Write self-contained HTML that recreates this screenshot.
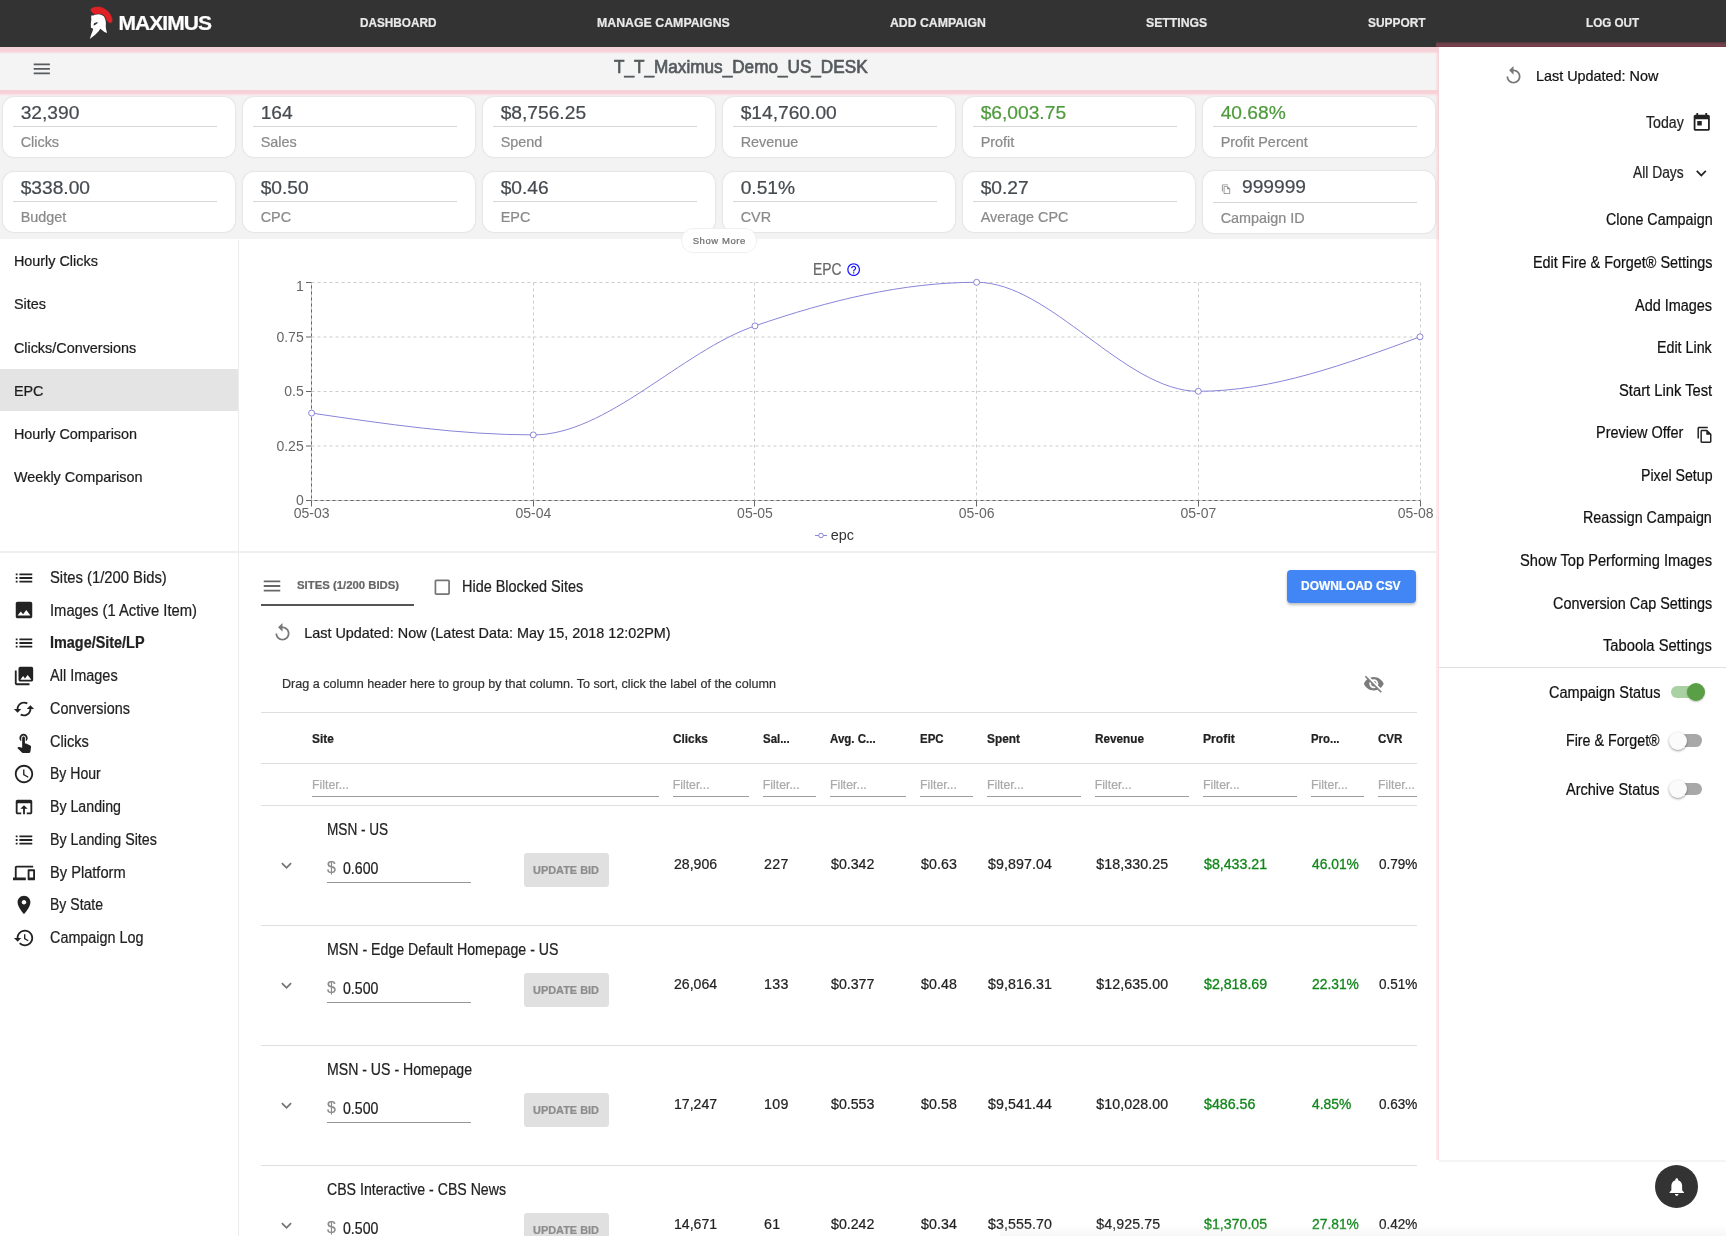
<!DOCTYPE html>
<html><head><meta charset="utf-8"><title>Maximus</title>
<style>
html,body{margin:0;padding:0;}
body{width:1726px;height:1236px;overflow:hidden;background:#fff;position:relative;font-family:"Liberation Sans",sans-serif;}
.a{position:absolute;}
.t{white-space:nowrap;line-height:20px;-webkit-text-stroke-width:0.22px;}
.med{-webkit-text-stroke:0.35px currentColor;}
</style></head><body><div class="a" style="left:0;top:0;width:1726px;height:1236px;will-change:transform;overflow:hidden;">

<div class="a" style="left:0.00px;top:0.00px;width:1726.00px;height:47.00px;background:#333333;"></div>
<div class="a" style="left:0.00px;top:52.00px;width:1439.00px;height:38.00px;background:#f4f4f4;"></div>
<div class="a" style="left:0.00px;top:95.00px;width:1439.00px;height:144.40px;background:#f3f3f3;"></div>
<div class="a" style="left:0;top:46.7px;width:1439px;height:7.7px;background:linear-gradient(to bottom,#f7d1d8 0,#f7d1d8 62%,rgba(247,209,216,0) 100%);"></div>
<div class="a" style="left:0;top:89.9px;width:1439px;height:6.3px;background:linear-gradient(to bottom,#f7d1d8 0,#f7d1d8 58%,rgba(247,209,216,0) 100%);"></div>
<div class="a" style="left:1435.2px;top:47px;width:3.8px;height:193px;background:linear-gradient(to right,rgba(247,209,216,0) 0,rgba(247,209,216,.55) 60%,#f7d1d8 80%,#f7d1d8 100%);"></div>
<div class="a" style="left:1435.600px;top:240px;width:3.400px;height:920px;background:linear-gradient(to right,rgba(247,209,216,0) 0,rgba(247,209,216,.45) 15%,rgba(247,209,216,.45) 70%,rgba(247,209,216,.75) 80%,rgba(247,209,216,.75) 100%);"></div>
<div class="a" style="left:1436px;top:41.500px;width:290px;height:5.500px;background:linear-gradient(to bottom,#4d383c 0,#73424d 45%,#7a4450 80%,#6a3641 100%);"></div>
<svg class="a" style="left:86px;top:4px" width="30" height="38" viewBox="86 4 30 38">
<path fill="#e02226" stroke="#e02226" stroke-width="0.6" stroke-linejoin="round" d="M90.63 9.99 L91.82 8.29 L94.88 7.27 L98.62 6.93 L101.68 7.44 L105.07 9.14 L107.79 11.35 L110.17 14.24 L111.53 17.30 L112.14 20.01 L111.87 22.05 L110.17 22.90 L108.47 22.05 L107.11 20.35 L106.09 17.98 L104.73 15.94 L103.03 14.41 L101.00 13.56 L98.96 13.39 L96.92 13.73 L94.20 14.07 L92.84 12.88Z"/>
<path fill="#ffffff" fill-rule="evenodd" d="M91.14 15.60 L93.18 15.43 L95.22 14.75 L98.96 14.24 L101.68 14.92 L104.05 16.62 L105.41 19.68 L105.92 23.07 L105.75 26.47 L106.09 29.19 L107.11 32.93 L104.39 31.91 L101.68 29.87 L100.32 28.85 L98.62 31.23 L95.22 34.63 L89.78 38.88 L91.14 34.63 L92.50 31.23 L93.18 28.85 L90.97 27.83 L90.80 24.09 L91.31 19.68Z M93.52 25.79 L94.03 23.24 L97.26 22.05 L97.66 23.07 L95.90 24.60Z"/>
</svg>
<div class="a t" style="top:13.49px;font-size:21.00px;color:#ffffff;font-weight:700;letter-spacing:-0.962px;left:118.50px;">MAXIMUS</div>
<div class="a t" style="top:12.95px;font-size:12.90px;color:#e9e9e9;font-weight:700;left:359.60px;transform:scaleX(0.9129);transform-origin:left center;">DASHBOARD</div>
<div class="a t" style="top:12.95px;font-size:12.90px;color:#e9e9e9;font-weight:700;left:596.70px;transform:scaleX(0.9574);transform-origin:left center;">MANAGE CAMPAIGNS</div>
<div class="a t" style="top:12.95px;font-size:12.90px;color:#e9e9e9;font-weight:700;left:889.80px;transform:scaleX(0.9520);transform-origin:left center;">ADD CAMPAIGN</div>
<div class="a t" style="top:12.95px;font-size:12.90px;color:#e9e9e9;font-weight:700;left:1146.00px;transform:scaleX(0.9508);transform-origin:left center;">SETTINGS</div>
<div class="a t" style="top:12.95px;font-size:12.90px;color:#e9e9e9;font-weight:700;left:1367.80px;transform:scaleX(0.9241);transform-origin:left center;">SUPPORT</div>
<div class="a t" style="top:12.95px;font-size:12.90px;color:#e9e9e9;font-weight:700;left:1586.20px;transform:scaleX(0.9058);transform-origin:left center;">LOG OUT</div>
<svg class="a" style="left:31.20px;top:57.70px;" width="21.60" height="21.60" viewBox="0 0 24 24"><path fill="#555b5e" d="M3 18h18v-2H3v2zm0-5h18v-2H3v2zm0-7v2h18V6H3z"/></svg>
<div class="a t" style="top:57.11px;font-size:17.90px;color:#555b5e;left:614.00px;-webkit-text-stroke:0.7px #555b5e;transform:scaleX(0.9588);transform-origin:left center;">T_T_Maximus_Demo_US_DESK</div>
<div class="a" style="left:3.00px;top:97.00px;width:232.00px;height:60.00px;background:#fff;border-radius:11px;box-shadow:0 0 2px rgba(0,0,0,.18);"></div>
<div class="a t" style="top:102.52px;font-size:19.20px;color:#464b50;left:20.70px;">32,390</div>
<div class="a" style="left:13.00px;top:126.00px;width:204.00px;height:1.00px;background:#d6d6d6;"></div>
<div class="a t" style="top:132.07px;font-size:14.40px;color:#8a8a8a;left:20.70px;">Clicks</div>
<div class="a" style="left:243.00px;top:97.00px;width:232.00px;height:60.00px;background:#fff;border-radius:11px;box-shadow:0 0 2px rgba(0,0,0,.18);"></div>
<div class="a t" style="top:102.52px;font-size:19.20px;color:#464b50;left:260.70px;">164</div>
<div class="a" style="left:253.00px;top:126.00px;width:204.00px;height:1.00px;background:#d6d6d6;"></div>
<div class="a t" style="top:132.07px;font-size:14.40px;color:#8a8a8a;left:260.70px;">Sales</div>
<div class="a" style="left:483.00px;top:97.00px;width:232.00px;height:60.00px;background:#fff;border-radius:11px;box-shadow:0 0 2px rgba(0,0,0,.18);"></div>
<div class="a t" style="top:102.52px;font-size:19.20px;color:#464b50;left:500.70px;">$8,756.25</div>
<div class="a" style="left:493.00px;top:126.00px;width:204.00px;height:1.00px;background:#d6d6d6;"></div>
<div class="a t" style="top:132.07px;font-size:14.40px;color:#8a8a8a;left:500.70px;">Spend</div>
<div class="a" style="left:723.00px;top:97.00px;width:232.00px;height:60.00px;background:#fff;border-radius:11px;box-shadow:0 0 2px rgba(0,0,0,.18);"></div>
<div class="a t" style="top:102.52px;font-size:19.20px;color:#464b50;left:740.70px;">$14,760.00</div>
<div class="a" style="left:733.00px;top:126.00px;width:204.00px;height:1.00px;background:#d6d6d6;"></div>
<div class="a t" style="top:132.07px;font-size:14.40px;color:#8a8a8a;left:740.70px;">Revenue</div>
<div class="a" style="left:963.00px;top:97.00px;width:232.00px;height:60.00px;background:#fff;border-radius:11px;box-shadow:0 0 2px rgba(0,0,0,.18);"></div>
<div class="a t" style="top:102.52px;font-size:19.20px;color:#4f9a3c;left:980.70px;">$6,003.75</div>
<div class="a" style="left:973.00px;top:126.00px;width:204.00px;height:1.00px;background:#d6d6d6;"></div>
<div class="a t" style="top:132.07px;font-size:14.40px;color:#8a8a8a;left:980.70px;">Profit</div>
<div class="a" style="left:1203.00px;top:97.00px;width:232.00px;height:60.00px;background:#fff;border-radius:11px;box-shadow:0 0 2px rgba(0,0,0,.18);"></div>
<div class="a t" style="top:102.52px;font-size:19.20px;color:#4f9a3c;left:1220.70px;">40.68%</div>
<div class="a" style="left:1213.00px;top:126.00px;width:204.00px;height:1.00px;background:#d6d6d6;"></div>
<div class="a t" style="top:132.07px;font-size:14.40px;color:#8a8a8a;left:1220.70px;">Profit Percent</div>
<div class="a" style="left:3.00px;top:172.00px;width:232.00px;height:60.00px;background:#fff;border-radius:11px;box-shadow:0 0 2px rgba(0,0,0,.18);"></div>
<div class="a t" style="top:177.52px;font-size:19.20px;color:#464b50;left:20.70px;">$338.00</div>
<div class="a" style="left:13.00px;top:201.00px;width:204.00px;height:1.00px;background:#d6d6d6;"></div>
<div class="a t" style="top:207.07px;font-size:14.40px;color:#8a8a8a;left:20.70px;">Budget</div>
<div class="a" style="left:243.00px;top:172.00px;width:232.00px;height:60.00px;background:#fff;border-radius:11px;box-shadow:0 0 2px rgba(0,0,0,.18);"></div>
<div class="a t" style="top:177.52px;font-size:19.20px;color:#464b50;left:260.70px;">$0.50</div>
<div class="a" style="left:253.00px;top:201.00px;width:204.00px;height:1.00px;background:#d6d6d6;"></div>
<div class="a t" style="top:207.07px;font-size:14.40px;color:#8a8a8a;left:260.70px;">CPC</div>
<div class="a" style="left:483.00px;top:172.00px;width:232.00px;height:60.00px;background:#fff;border-radius:11px;box-shadow:0 0 2px rgba(0,0,0,.18);"></div>
<div class="a t" style="top:177.52px;font-size:19.20px;color:#464b50;left:500.70px;">$0.46</div>
<div class="a" style="left:493.00px;top:201.00px;width:204.00px;height:1.00px;background:#d6d6d6;"></div>
<div class="a t" style="top:207.07px;font-size:14.40px;color:#8a8a8a;left:500.70px;">EPC</div>
<div class="a" style="left:723.00px;top:172.00px;width:232.00px;height:60.00px;background:#fff;border-radius:11px;box-shadow:0 0 2px rgba(0,0,0,.18);"></div>
<div class="a t" style="top:177.52px;font-size:19.20px;color:#464b50;left:740.70px;">0.51%</div>
<div class="a" style="left:733.00px;top:201.00px;width:204.00px;height:1.00px;background:#d6d6d6;"></div>
<div class="a t" style="top:207.07px;font-size:14.40px;color:#8a8a8a;left:740.70px;">CVR</div>
<div class="a" style="left:963.00px;top:172.00px;width:232.00px;height:60.00px;background:#fff;border-radius:11px;box-shadow:0 0 2px rgba(0,0,0,.18);"></div>
<div class="a t" style="top:177.52px;font-size:19.20px;color:#464b50;left:980.70px;">$0.27</div>
<div class="a" style="left:973.00px;top:201.00px;width:204.00px;height:1.00px;background:#d6d6d6;"></div>
<div class="a t" style="top:207.07px;font-size:14.40px;color:#8a8a8a;left:980.70px;">Average CPC</div>
<div class="a" style="left:1203.00px;top:170.80px;width:232.00px;height:62.00px;background:#fff;border-radius:11px;box-shadow:0 0 2px rgba(0,0,0,.18);"></div>
<div class="a t" style="top:176.82px;font-size:19.20px;color:#464b50;left:1242.00px;">999999</div>
<div class="a" style="left:1213.00px;top:202.00px;width:204.00px;height:1.00px;background:#d6d6d6;"></div>
<div class="a t" style="top:208.07px;font-size:14.40px;color:#8a8a8a;left:1220.70px;">Campaign ID</div>
<svg class="a" style="left:1221.45px;top:183.75px;" width="10.50" height="10.50" viewBox="0 0 24 24"><path fill="#8a8a8a" d="M16 1H4c-1.1 0-2 .9-2 2v14h2V3h12V1zm-1 4H8c-1.1 0-1.990.9-1.990 2L6 21c0 1.1.890 2 1.990 2H19c1.100 0 2-.9 2-2V11l-6-6zM8 21V7h6v5h5v9H8z"/></svg>
<div class="a" style="left:238.00px;top:240.00px;width:1.00px;height:996.00px;background:#ececec;"></div>
<div class="a" style="left:0.00px;top:551.00px;width:1436.00px;height:2.00px;background:#eeeeee;"></div>
<div class="a" style="left:0.00px;top:369.20px;width:238.00px;height:42.30px;background:#e4e4e4;"></div>
<div class="a t" style="top:250.77px;font-size:14.40px;color:#1c1c1c;left:13.90px;">Hourly Clicks</div>
<div class="a t" style="top:294.17px;font-size:14.40px;color:#1c1c1c;left:13.90px;">Sites</div>
<div class="a t" style="top:337.57px;font-size:14.40px;color:#1c1c1c;left:13.90px;">Clicks/Conversions</div>
<div class="a t" style="top:380.97px;font-size:14.40px;color:#1c1c1c;left:13.90px;">EPC</div>
<div class="a t" style="top:424.37px;font-size:14.40px;color:#1c1c1c;left:13.90px;">Hourly Comparison</div>
<div class="a t" style="top:467.17px;font-size:14.40px;color:#1c1c1c;left:13.90px;">Weekly Comparison</div>
<div class="a" style="left:681.50px;top:228.60px;width:74.80px;height:23.40px;background:rgba(255,255,255,.93);border-radius:12px;box-shadow:0 0 0 1px #efefef;"></div>
<div class="a t" style="top:230.71px;font-size:9.50px;color:#6e6e6e;letter-spacing:0.567px;left:692.70px;">Show More</div>
<svg class="a" style="left:0;top:0" width="1440" height="560" viewBox="0 0 1440 560" font-family="Liberation Sans, sans-serif"><g stroke="#666" stroke-width="1" fill="none"><path d="M311.5 282.500V500.500"/><path d="M311.500 500.500H1420.500"/></g><g stroke="#ccc" stroke-width="1" stroke-dasharray="3 3" fill="none"><path d="M311.500 282.5H1420.500"/><path d="M311.500 337.0H1420.500"/><path d="M311.500 391.5H1420.500"/><path d="M311.500 446.0H1420.500"/><path d="M311.500 500.5H1420.500"/><path d="M311.5 282.500V500.500"/><path d="M533.5 282.500V500.500"/><path d="M754.5 282.500V500.500"/><path d="M976.5 282.500V500.500"/><path d="M1198.5 282.500V500.500"/><path d="M1420.5 282.500V500.500"/></g><g stroke="#666" stroke-width="1"><path d="M306 282.5H311.500"/><path d="M306 337.0H311.500"/><path d="M306 391.5H311.500"/><path d="M306 446.0H311.500"/><path d="M306 500.5H311.500"/><path d="M311.5 500.500V506.500"/><path d="M533.5 500.500V506.500"/><path d="M754.5 500.500V506.500"/><path d="M976.5 500.500V506.500"/><path d="M1198.5 500.500V506.500"/><path d="M1420.5 500.500V506.500"/></g><g fill="#666" font-size="14"><text x="303.700" y="290.9" text-anchor="end">1</text><text x="303.700" y="341.8" text-anchor="end">0.75</text><text x="303.700" y="396.3" text-anchor="end">0.5</text><text x="303.700" y="450.8" text-anchor="end">0.25</text><text x="303.700" y="505.3" text-anchor="end">0</text><text x="311.6" y="518.000" text-anchor="middle">05-03</text><text x="533.3" y="518.000" text-anchor="middle">05-04</text><text x="755.0" y="518.000" text-anchor="middle">05-05</text><text x="976.6" y="518.000" text-anchor="middle">05-06</text><text x="1198.3" y="518.000" text-anchor="middle">05-07</text><text x="1433.500" y="518.000" text-anchor="end">05-08</text></g><path fill="none" stroke="#8884d8" stroke-width="1" d="M311.60,413.10C385.49,424.00,459.39,434.90,533.28,434.90C607.17,434.90,681.07,351.33,754.96,325.90C828.850,300.47,902.75,282.30,976.64,282.30C1050.53,282.30,1124.43,391.30,1198.32,391.30C1272.21,391.30,1346.11,364.05,1420.00,336.80"/><circle cx="311.60" cy="413.10" r="3" fill="#fff" stroke="#8884d8" stroke-width="1"/><circle cx="533.28" cy="434.90" r="3" fill="#fff" stroke="#8884d8" stroke-width="1"/><circle cx="754.96" cy="325.90" r="3" fill="#fff" stroke="#8884d8" stroke-width="1"/><circle cx="976.64" cy="282.30" r="3" fill="#fff" stroke="#8884d8" stroke-width="1"/><circle cx="1198.32" cy="391.30" r="3" fill="#fff" stroke="#8884d8" stroke-width="1"/><circle cx="1420.00" cy="336.80" r="3" fill="#fff" stroke="#8884d8" stroke-width="1"/><path d="M815 535.500H827" stroke="#8884d8" stroke-width="1" fill="none"/><circle cx="821" cy="535.500" r="2.300" fill="#fff" stroke="#8884d8" stroke-width="1"/><text x="830.800" y="540.200" font-size="14.400" fill="#333">epc</text></svg>
<div class="a t" style="top:258.79px;font-size:16.30px;color:#666;left:813.40px;transform:scaleX(0.855);transform-origin:left center;">EPC</div>
<svg class="a" style="left:845.55px;top:262.35px;" width="15.30" height="15.30" viewBox="0 0 24 24"><path fill="#1a1aff" d="M11 18h2v-2h-2v2zm1-16C6.48 2 2 6.48 2 12s4.48 10 10 10 10-4.48 10-10S17.52 2 12 2zm0 18c-4.41 0-8-3.59-8-8s3.59-8 8-8 8 3.59 8 8-3.59 8-8 8zm0-14c-2.21 0-4 1.79-4 4h2c0-1.1.9-2 2-2s2 .9 2 2c0 2-3 1.75-3 5h2c0-2.250 3-2.5 3-5 0-2.21-1.79-4-4-4z"/></svg>
<svg class="a" style="left:12.90px;top:566.70px;" width="22.00" height="22.00" viewBox="0 0 24 24"><path fill="#222" d="M3 13h2v-2H3v2zm0 4h2v-2H3v2zm0-8h2V7H3v2zm4 4h14v-2H7v2zm0 4h14v-2H7v2zM7 7v2h14V7H7z"/></svg>
<div class="a t" style="top:567.78px;font-size:15.80px;color:#222;left:49.75px;transform:scaleX(0.9363);transform-origin:left center;">Sites (1/200 Bids)</div>
<svg class="a" style="left:12.90px;top:599.47px;" width="22.00" height="22.00" viewBox="0 0 24 24"><path fill="#222" d="M21 19V5c0-1.1-.9-2-2-2H5c-1.1 0-2 .9-2 2v14c0 1.1.9 2 2 2h14c1.1 0 2-.9 2-2zM8.5 13.5l2.5 3.01L14.5 12l4.5 6H5l3.5-4.500z"/></svg>
<div class="a t" style="top:600.55px;font-size:15.80px;color:#222;left:49.75px;transform:scaleX(0.9351);transform-origin:left center;">Images (1 Active Item)</div>
<svg class="a" style="left:12.90px;top:632.24px;" width="22.00" height="22.00" viewBox="0 0 24 24"><path fill="#222" d="M3 13h2v-2H3v2zm0 4h2v-2H3v2zm0-8h2V7H3v2zm4 4h14v-2H7v2zm0 4h14v-2H7v2zM7 7v2h14V7H7z"/></svg>
<div class="a t" style="top:633.32px;font-size:15.80px;color:#222;font-weight:700;left:49.75px;transform:scaleX(0.9127);transform-origin:left center;">Image/Site/LP</div>
<svg class="a" style="left:12.90px;top:665.01px;" width="22.00" height="22.00" viewBox="0 0 24 24"><path fill="#222" d="M22 16V4c0-1.1-.9-2-2-2H8c-1.1 0-2 .9-2 2v12c0 1.1.9 2 2 2h12c1.1 0 2-.9 2-2zm-11-4l2.03 2.71L16 11l4 5H8l3-4zM2 6v14c0 1.1.9 2 2 2h14v-2H4V6H2z"/></svg>
<div class="a t" style="top:666.09px;font-size:15.80px;color:#222;left:49.75px;transform:scaleX(0.9173);transform-origin:left center;">All Images</div>
<svg class="a" style="left:12.90px;top:697.78px;" width="22.00" height="22.00" viewBox="0 0 24 24"><path fill="#222" d="M19 8l-4 4h3c0 3.31-2.69 6-6 6-1.01 0-1.97-.25-2.8-.7l-1.46 1.46C8.97 19.54 10.43 20 12 20c4.42 0 8-3.58 8-8h3l-4-4zM6 12c0-3.31 2.69-6 6-6 1.01 0 1.97.25 2.8.7l1.46-1.46C15.03 4.46 13.57 4 12 4c-4.42 0-8 3.58-8 8H1l4 4 4-4H6z"/></svg>
<div class="a t" style="top:698.86px;font-size:15.80px;color:#222;left:49.75px;transform:scaleX(0.9105);transform-origin:left center;">Conversions</div>
<svg class="a" style="left:12.90px;top:730.55px;" width="22.00" height="22.00" viewBox="0 0 24 24"><path fill="#222" d="M9 11.24V7.5C9 6.12 10.12 5 11.5 5S14 6.12 14 7.5v3.74c1.21-.81 2-2.18 2-3.74C16 5.01 13.99 3 11.5 3S7 5.01 7 7.5c0 1.56.79 2.93 2 3.74zm9.84 4.63l-4.54-2.26c-.17-.07-.35-.11-.54-.11H13v-6c0-.83-.67-1.5-1.5-1.5S10 6.67 10 7.5v10.74l-3.43-.72c-.08-.01-.15-.03-.24-.03-.31 0-.59.13-.79.33l-.79.8 4.94 4.94c.27.27.65.44 1.06.44h6.79c.75 0 1.33-.55 1.44-1.28l.75-5.27c.01-.07.02-.14.02-.2 0-.62-.38-1.16-.91-1.380z"/></svg>
<div class="a t" style="top:731.63px;font-size:15.80px;color:#222;left:49.75px;transform:scaleX(0.9223);transform-origin:left center;">Clicks</div>
<svg class="a" style="left:12.90px;top:763.32px;" width="22.00" height="22.00" viewBox="0 0 24 24"><path fill="#222" d="M11.99 2C6.47 2 2 6.48 2 12s4.47 10 9.99 10C17.52 22 22 17.52 22 12S17.52 2 11.99 2zM12 20c-4.42 0-8-3.58-8-8s3.58-8 8-8 8 3.58 8 8-3.58 8-8 8zm.5-13H11v6l5.25 3.15.75-1.23-4.5-2.67z"/></svg>
<div class="a t" style="top:764.40px;font-size:15.80px;color:#222;left:49.75px;transform:scaleX(0.8891);transform-origin:left center;">By Hour</div>
<svg class="a" style="left:12.90px;top:796.09px;" width="22.00" height="22.00" viewBox="0 0 24 24"><path fill="#222" d="M19 4H5c-1.11 0-2 .9-2 2v12c0 1.1.89 2 2 2h4v-2H5V8h14v10h-4v2h4c1.1 0 2-.9 2-2V6c0-1.1-.89-2-2-2zm-7 6l-4 4h3v6h2v-6h3l-4-4z"/></svg>
<div class="a t" style="top:797.17px;font-size:15.80px;color:#222;left:49.75px;transform:scaleX(0.8976);transform-origin:left center;">By Landing</div>
<svg class="a" style="left:12.90px;top:828.86px;" width="22.00" height="22.00" viewBox="0 0 24 24"><path fill="#222" d="M3 13h2v-2H3v2zm0 4h2v-2H3v2zm0-8h2V7H3v2zm4 4h14v-2H7v2zm0 4h14v-2H7v2zM7 7v2h14V7H7z"/></svg>
<div class="a t" style="top:829.94px;font-size:15.80px;color:#222;left:49.75px;transform:scaleX(0.9012);transform-origin:left center;">By Landing Sites</div>
<svg class="a" style="left:12.90px;top:861.63px;" width="22.00" height="22.00" viewBox="0 0 24 24"><path fill="#222" d="M4 6h18V4H4c-1.1 0-2 .9-2 2v11H0v3h14v-3H4V6zm19 2h-6c-.55 0-1 .45-1 1v10c0 .55.45 1 1 1h6c.55 0 1-.45 1-1V9c0-.55-.45-1-1-1zm-1 9h-4v-7h4v7z"/></svg>
<div class="a t" style="top:862.71px;font-size:15.80px;color:#222;left:49.75px;transform:scaleX(0.9266);transform-origin:left center;">By Platform</div>
<svg class="a" style="left:12.90px;top:894.40px;" width="22.00" height="22.00" viewBox="0 0 24 24"><path fill="#222" d="M12 2C8.13 2 5 5.13 5 9c0 5.25 7 13 7 13s7-7.75 7-13c0-3.87-3.13-7-7-7zm0 9.5c-1.38 0-2.5-1.12-2.5-2.5s1.12-2.5 2.5-2.5 2.5 1.12 2.5 2.5-1.12 2.5-2.5 2.5z"/></svg>
<div class="a t" style="top:895.48px;font-size:15.80px;color:#222;left:49.75px;transform:scaleX(0.8883);transform-origin:left center;">By State</div>
<svg class="a" style="left:12.90px;top:927.17px;" width="22.00" height="22.00" viewBox="0 0 24 24"><path fill="#222" d="M13 3c-4.97 0-9 4.03-9 9H1l3.89 3.89.07.14L9 12H6c0-3.87 3.13-7 7-7s7 3.13 7 7-3.13 7-7 7c-1.93 0-3.68-.79-4.94-2.06l-1.42 1.42C8.27 19.99 10.51 21 13 21c4.97 0 9-4.03 9-9s-4.03-9-9-9zm-1 5v5l4.28 2.54.72-1.21-3.5-2.08V8H12z"/></svg>
<div class="a t" style="top:928.25px;font-size:15.80px;color:#222;left:49.75px;transform:scaleX(0.9105);transform-origin:left center;">Campaign Log</div>
<svg class="a" style="left:260.80px;top:575.30px;" width="22.00" height="22.00" viewBox="0 0 24 24"><path fill="#666" d="M3 18h18v-2H3v2zm0-5h18v-2H3v2zm0-7v2h18V6H3z"/></svg>
<div class="a t" style="top:575.34px;font-size:11.80px;color:#666;font-weight:700;left:296.70px;transform:scaleX(0.9612);transform-origin:left center;">SITES (1/200 BIDS)</div>
<div class="a" style="left:261.00px;top:604.00px;width:153.00px;height:2.00px;background:#555;"></div>
<svg class="a" style="left:432.25px;top:576.75px;" width="20.50" height="20.50" viewBox="0 0 24 24"><path fill="#757575" d="M19 5v14H5V5h14m0-2H5c-1.1 0-2 .9-2 2v14c0 1.1.9 2 2 2h14c1.1 0 2-.9 2-2V5c0-1.1-.9-2-2-2z"/></svg>
<div class="a t" style="top:577.38px;font-size:15.80px;color:#222;left:461.80px;transform:scaleX(0.9141);transform-origin:left center;">Hide Blocked Sites</div>
<div class="a" style="left:1287.00px;top:570.00px;width:129.00px;height:33.00px;background:#4285f4;border-radius:4px;box-shadow:0 2px 3px rgba(0,0,0,.26);"></div>
<div class="a t" style="top:575.74px;font-size:12.50px;color:#fff;font-weight:700;left:1301.30px;transform:scaleX(0.9561);transform-origin:left center;">DOWNLOAD CSV</div>
<svg class="a" style="left:272.10px;top:621.70px;" width="21.00" height="21.00" viewBox="0 0 24 24"><path fill="#777" d="M12 5V1L7 6l5 5V7c3.31 0 6 2.69 6 6s-2.69 6-6 6-6-2.69-6-6H4c0 4.42 3.58 8 8 8s8-3.58 8-8-3.58-8-8-8z"/></svg>
<div class="a t" style="top:622.97px;font-size:14.40px;color:#1c1c1c;left:304.20px;">Last Updated: Now (Latest Data: May 15, 2018 12:02PM)</div>
<div class="a t" style="top:673.75px;font-size:12.70px;color:#333;left:282.40px;transform:scaleX(0.9910);transform-origin:left center;">Drag a column header here to group by that column. To sort, click the label of the column</div>
<svg class="a" style="left:1363.10px;top:673.10px;" width="21.60" height="21.60" viewBox="0 0 24 24"><path fill="#7c7c7c" d="M12 7c2.76 0 5 2.24 5 5 0 .65-.13 1.26-.36 1.83l2.92 2.92c1.51-1.26 2.7-2.89 3.43-4.75-1.73-4.39-6-7.5-11-7.5-1.4 0-2.74.25-3.98.7l2.16 2.16C10.74 7.13 11.35 7 12 7zM2 4.27l2.28 2.28.46.46C3.08 8.3 1.78 10.02 1 12c1.73 4.39 6 7.5 11 7.5 1.55 0 3.03-.3 4.38-.84l.42.42L19.73 22 21 20.73 3.27 3 2 4.27zM7.53 9.8l1.55 1.55c-.05.21-.08.43-.08.65 0 1.66 1.34 3 3 3 .22 0 .44-.03.65-.08l1.55 1.55c-.67.33-1.41.53-2.2.53-2.76 0-5-2.24-5-5 0-.79.2-1.53.53-2.2zm4.31-.78l3.15 3.15.02-.16c0-1.66-1.34-3-3-3l-.17.01z"/></svg>
<div class="a" style="left:261.00px;top:712.00px;width:1156.00px;height:1.00px;background:#dedede;"></div>
<div class="a" style="left:261.00px;top:763.00px;width:1156.00px;height:1.00px;background:#dedede;"></div>
<div class="a" style="left:261.00px;top:804.50px;width:1156.00px;height:1.00px;background:#dedede;"></div>
<div class="a t" style="top:729.04px;font-size:12.10px;color:#222;font-weight:700;left:312.00px;transform:scaleX(0.9825);transform-origin:left center;">Site</div>
<div class="a t" style="top:774.74px;font-size:12.30px;color:#aaa;left:312.00px;">Filter...</div>
<div class="a" style="left:312.00px;top:796.40px;width:346.80px;height:1.00px;background:#9c9c9c;"></div>
<div class="a t" style="top:729.04px;font-size:12.10px;color:#222;font-weight:700;left:672.70px;transform:scaleX(0.9764);transform-origin:left center;">Clicks</div>
<div class="a t" style="top:774.74px;font-size:12.30px;color:#aaa;left:672.70px;">Filter...</div>
<div class="a" style="left:672.70px;top:796.40px;width:76.20px;height:1.00px;background:#9c9c9c;"></div>
<div class="a t" style="top:729.04px;font-size:12.10px;color:#222;font-weight:700;left:762.80px;transform:scaleX(0.9457);transform-origin:left center;">Sal...</div>
<div class="a t" style="top:774.74px;font-size:12.30px;color:#aaa;left:762.80px;">Filter...</div>
<div class="a" style="left:762.80px;top:796.40px;width:53.20px;height:1.00px;background:#9c9c9c;"></div>
<div class="a t" style="top:729.04px;font-size:12.10px;color:#222;font-weight:700;left:829.90px;transform:scaleX(0.9512);transform-origin:left center;">Avg. C...</div>
<div class="a t" style="top:774.74px;font-size:12.30px;color:#aaa;left:829.90px;">Filter...</div>
<div class="a" style="left:829.90px;top:796.40px;width:76.10px;height:1.00px;background:#9c9c9c;"></div>
<div class="a t" style="top:729.04px;font-size:12.10px;color:#222;font-weight:700;left:920.00px;transform:scaleX(0.9487);transform-origin:left center;">EPC</div>
<div class="a t" style="top:774.74px;font-size:12.30px;color:#aaa;left:920.00px;">Filter...</div>
<div class="a" style="left:920.00px;top:796.40px;width:52.80px;height:1.00px;background:#9c9c9c;"></div>
<div class="a t" style="top:729.04px;font-size:12.10px;color:#222;font-weight:700;left:987.00px;transform:scaleX(0.9819);transform-origin:left center;">Spent</div>
<div class="a t" style="top:774.74px;font-size:12.30px;color:#aaa;left:987.00px;">Filter...</div>
<div class="a" style="left:987.00px;top:796.40px;width:93.90px;height:1.00px;background:#9c9c9c;"></div>
<div class="a t" style="top:729.04px;font-size:12.10px;color:#222;font-weight:700;left:1094.80px;transform:scaleX(0.9718);transform-origin:left center;">Revenue</div>
<div class="a t" style="top:774.74px;font-size:12.30px;color:#aaa;left:1094.80px;">Filter...</div>
<div class="a" style="left:1094.80px;top:796.40px;width:93.80px;height:1.00px;background:#9c9c9c;"></div>
<div class="a t" style="top:729.04px;font-size:12.10px;color:#222;font-weight:700;letter-spacing:0.084px;left:1202.90px;">Profit</div>
<div class="a t" style="top:774.74px;font-size:12.30px;color:#aaa;left:1202.90px;">Filter...</div>
<div class="a" style="left:1202.90px;top:796.40px;width:93.80px;height:1.00px;background:#9c9c9c;"></div>
<div class="a t" style="top:729.04px;font-size:12.10px;color:#222;font-weight:700;left:1311.00px;transform:scaleX(0.9421);transform-origin:left center;">Pro...</div>
<div class="a t" style="top:774.74px;font-size:12.30px;color:#aaa;left:1311.00px;">Filter...</div>
<div class="a" style="left:1311.00px;top:796.40px;width:52.80px;height:1.00px;background:#9c9c9c;"></div>
<div class="a t" style="top:729.04px;font-size:12.10px;color:#222;font-weight:700;left:1378.00px;transform:scaleX(0.9551);transform-origin:left center;">CVR</div>
<div class="a t" style="top:774.74px;font-size:12.30px;color:#aaa;left:1378.00px;">Filter...</div>
<div class="a" style="left:1378.00px;top:796.40px;width:39.00px;height:1.00px;background:#9c9c9c;"></div>
<div class="a t" style="top:819.68px;font-size:15.80px;color:#222;left:327.20px;transform:scaleX(0.8608);transform-origin:left center;">MSN - US</div>
<svg class="a" style="left:275.50px;top:855.00px;" width="21.00" height="21.00" viewBox="0 0 24 24"><path fill="#757575" d="M7.41 8.59L12 13.17l4.59-4.58L18 10l-6 6-6-6 1.41-1.41z"/></svg>
<div class="a t" style="top:858.48px;font-size:15.80px;color:#8a8a8a;left:327.00px;">$</div>
<div class="a t" style="top:858.58px;font-size:15.80px;color:#222;left:342.90px;transform:scaleX(0.8955);transform-origin:left center;">0.600</div>
<div class="a" style="left:327.00px;top:882.00px;width:144.00px;height:1.00px;background:#969696;"></div>
<div class="a" style="left:524.00px;top:853.30px;width:85.00px;height:34.20px;background:#e0e0e0;border-radius:3px;"></div>
<div class="a t" style="top:860.13px;font-size:11.30px;color:#8c8c8c;font-weight:700;left:533.00px;transform:scaleX(0.9677);transform-origin:left center;">UPDATE BID</div>
<div class="a t" style="top:854.36px;font-size:14.20px;color:#222;left:674.00px;transform:scaleX(0.9929);transform-origin:left center;">28,906</div>
<div class="a t" style="top:854.36px;font-size:14.20px;color:#222;letter-spacing:0.314px;left:764.00px;">227</div>
<div class="a t" style="top:854.36px;font-size:14.20px;color:#222;left:831.00px;">$0.342</div>
<div class="a t" style="top:854.36px;font-size:14.20px;color:#222;letter-spacing:0.121px;left:921.00px;">$0.63</div>
<div class="a t" style="top:854.36px;font-size:14.20px;color:#222;letter-spacing:0.097px;left:988.00px;">$9,897.04</div>
<div class="a t" style="top:854.36px;font-size:14.20px;color:#222;letter-spacing:0.109px;left:1096.20px;">$18,330.25</div>
<div class="a t" style="top:854.36px;font-size:14.20px;color:#11861a;left:1204.20px;-webkit-text-stroke:0.3px #11861a;transform:scaleX(0.9996);transform-origin:left center;">$8,433.21</div>
<div class="a t" style="top:854.36px;font-size:14.20px;color:#11861a;left:1312.00px;-webkit-text-stroke:0.3px #11861a;transform:scaleX(0.9745);transform-origin:left center;">46.01%</div>
<div class="a t" style="top:854.36px;font-size:14.20px;color:#222;left:1379.00px;transform:scaleX(0.9544);transform-origin:left center;">0.79%</div>
<div class="a" style="left:261.00px;top:924.50px;width:1156.00px;height:1.00px;background:#dedede;"></div>
<div class="a t" style="top:939.68px;font-size:15.80px;color:#222;left:327.20px;transform:scaleX(0.8968);transform-origin:left center;">MSN - Edge Default Homepage - US</div>
<svg class="a" style="left:275.50px;top:975.00px;" width="21.00" height="21.00" viewBox="0 0 24 24"><path fill="#757575" d="M7.41 8.59L12 13.17l4.59-4.58L18 10l-6 6-6-6 1.41-1.41z"/></svg>
<div class="a t" style="top:978.48px;font-size:15.80px;color:#8a8a8a;left:327.00px;">$</div>
<div class="a t" style="top:978.58px;font-size:15.80px;color:#222;left:342.90px;transform:scaleX(0.8955);transform-origin:left center;">0.500</div>
<div class="a" style="left:327.00px;top:1002.00px;width:144.00px;height:1.00px;background:#969696;"></div>
<div class="a" style="left:524.00px;top:973.30px;width:85.00px;height:34.20px;background:#e0e0e0;border-radius:3px;"></div>
<div class="a t" style="top:980.13px;font-size:11.30px;color:#8c8c8c;font-weight:700;left:533.00px;transform:scaleX(0.9677);transform-origin:left center;">UPDATE BID</div>
<div class="a t" style="top:974.36px;font-size:14.20px;color:#222;left:674.00px;transform:scaleX(0.9929);transform-origin:left center;">26,064</div>
<div class="a t" style="top:974.36px;font-size:14.20px;color:#222;letter-spacing:0.314px;left:764.00px;">133</div>
<div class="a t" style="top:974.36px;font-size:14.20px;color:#222;left:831.00px;">$0.377</div>
<div class="a t" style="top:974.36px;font-size:14.20px;color:#222;letter-spacing:0.121px;left:921.00px;">$0.48</div>
<div class="a t" style="top:974.36px;font-size:14.20px;color:#222;letter-spacing:0.097px;left:988.00px;">$9,816.31</div>
<div class="a t" style="top:974.36px;font-size:14.20px;color:#222;letter-spacing:0.109px;left:1096.20px;">$12,635.00</div>
<div class="a t" style="top:974.36px;font-size:14.20px;color:#11861a;left:1204.20px;-webkit-text-stroke:0.3px #11861a;transform:scaleX(0.9996);transform-origin:left center;">$2,818.69</div>
<div class="a t" style="top:974.36px;font-size:14.20px;color:#11861a;left:1312.00px;-webkit-text-stroke:0.3px #11861a;transform:scaleX(0.9745);transform-origin:left center;">22.31%</div>
<div class="a t" style="top:974.36px;font-size:14.20px;color:#222;left:1379.00px;transform:scaleX(0.9544);transform-origin:left center;">0.51%</div>
<div class="a" style="left:261.00px;top:1044.50px;width:1156.00px;height:1.00px;background:#dedede;"></div>
<div class="a t" style="top:1059.68px;font-size:15.80px;color:#222;left:327.20px;transform:scaleX(0.8928);transform-origin:left center;">MSN - US - Homepage</div>
<svg class="a" style="left:275.50px;top:1095.00px;" width="21.00" height="21.00" viewBox="0 0 24 24"><path fill="#757575" d="M7.41 8.59L12 13.17l4.59-4.58L18 10l-6 6-6-6 1.41-1.41z"/></svg>
<div class="a t" style="top:1098.48px;font-size:15.80px;color:#8a8a8a;left:327.00px;">$</div>
<div class="a t" style="top:1098.58px;font-size:15.80px;color:#222;left:342.90px;transform:scaleX(0.8955);transform-origin:left center;">0.500</div>
<div class="a" style="left:327.00px;top:1122.00px;width:144.00px;height:1.00px;background:#969696;"></div>
<div class="a" style="left:524.00px;top:1093.30px;width:85.00px;height:34.20px;background:#e0e0e0;border-radius:3px;"></div>
<div class="a t" style="top:1100.13px;font-size:11.30px;color:#8c8c8c;font-weight:700;left:533.00px;transform:scaleX(0.9677);transform-origin:left center;">UPDATE BID</div>
<div class="a t" style="top:1094.36px;font-size:14.20px;color:#222;left:674.00px;transform:scaleX(0.9929);transform-origin:left center;">17,247</div>
<div class="a t" style="top:1094.36px;font-size:14.20px;color:#222;letter-spacing:0.314px;left:764.00px;">109</div>
<div class="a t" style="top:1094.36px;font-size:14.20px;color:#222;left:831.00px;">$0.553</div>
<div class="a t" style="top:1094.36px;font-size:14.20px;color:#222;letter-spacing:0.121px;left:921.00px;">$0.58</div>
<div class="a t" style="top:1094.36px;font-size:14.20px;color:#222;letter-spacing:0.097px;left:988.00px;">$9,541.44</div>
<div class="a t" style="top:1094.36px;font-size:14.20px;color:#222;letter-spacing:0.109px;left:1096.20px;">$10,028.00</div>
<div class="a t" style="top:1094.36px;font-size:14.20px;color:#11861a;left:1204.20px;-webkit-text-stroke:0.3px #11861a;transform:scaleX(0.9996);transform-origin:left center;">$486.56</div>
<div class="a t" style="top:1094.36px;font-size:14.20px;color:#11861a;left:1312.00px;-webkit-text-stroke:0.3px #11861a;transform:scaleX(0.9745);transform-origin:left center;">4.85%</div>
<div class="a t" style="top:1094.36px;font-size:14.20px;color:#222;left:1379.00px;transform:scaleX(0.9544);transform-origin:left center;">0.63%</div>
<div class="a" style="left:261.00px;top:1164.50px;width:1156.00px;height:1.00px;background:#dedede;"></div>
<div class="a t" style="top:1179.68px;font-size:15.80px;color:#222;left:327.20px;transform:scaleX(0.8943);transform-origin:left center;">CBS Interactive - CBS News</div>
<svg class="a" style="left:275.50px;top:1215.00px;" width="21.00" height="21.00" viewBox="0 0 24 24"><path fill="#757575" d="M7.41 8.59L12 13.17l4.59-4.58L18 10l-6 6-6-6 1.41-1.41z"/></svg>
<div class="a t" style="top:1218.48px;font-size:15.80px;color:#8a8a8a;left:327.00px;">$</div>
<div class="a t" style="top:1218.58px;font-size:15.80px;color:#222;left:342.90px;transform:scaleX(0.8955);transform-origin:left center;">0.500</div>
<div class="a" style="left:327.00px;top:1242.00px;width:144.00px;height:1.00px;background:#969696;"></div>
<div class="a" style="left:524.00px;top:1213.30px;width:85.00px;height:34.20px;background:#e0e0e0;border-radius:3px;"></div>
<div class="a t" style="top:1220.13px;font-size:11.30px;color:#8c8c8c;font-weight:700;left:533.00px;transform:scaleX(0.9677);transform-origin:left center;">UPDATE BID</div>
<div class="a t" style="top:1214.36px;font-size:14.20px;color:#222;left:674.00px;transform:scaleX(0.9929);transform-origin:left center;">14,671</div>
<div class="a t" style="top:1214.36px;font-size:14.20px;color:#222;letter-spacing:0.314px;left:764.00px;">61</div>
<div class="a t" style="top:1214.36px;font-size:14.20px;color:#222;left:831.00px;">$0.242</div>
<div class="a t" style="top:1214.36px;font-size:14.20px;color:#222;letter-spacing:0.121px;left:921.00px;">$0.34</div>
<div class="a t" style="top:1214.36px;font-size:14.20px;color:#222;letter-spacing:0.097px;left:988.00px;">$3,555.70</div>
<div class="a t" style="top:1214.36px;font-size:14.20px;color:#222;letter-spacing:0.109px;left:1096.20px;">$4,925.75</div>
<div class="a t" style="top:1214.36px;font-size:14.20px;color:#11861a;left:1204.20px;-webkit-text-stroke:0.3px #11861a;transform:scaleX(0.9996);transform-origin:left center;">$1,370.05</div>
<div class="a t" style="top:1214.36px;font-size:14.20px;color:#11861a;left:1312.00px;-webkit-text-stroke:0.3px #11861a;transform:scaleX(0.9745);transform-origin:left center;">27.81%</div>
<div class="a t" style="top:1214.36px;font-size:14.20px;color:#222;left:1379.00px;transform:scaleX(0.9544);transform-origin:left center;">0.42%</div>
<div class="a" style="left:1439.00px;top:47.00px;width:287.00px;height:1113.00px;background:#fff;"></div>
<div class="a" style="left:1439.00px;top:1160.00px;width:287.00px;height:2.00px;background:#f4f4f4;"></div>
<svg class="a" style="left:1503.30px;top:64.80px;" width="21.00" height="21.00" viewBox="0 0 24 24"><path fill="#777" d="M12 5V1L7 6l5 5V7c3.31 0 6 2.69 6 6s-2.69 6-6 6-6-2.69-6-6H4c0 4.42 3.58 8 8 8s8-3.58 8-8-3.58-8-8-8z"/></svg>
<div class="a t" style="top:66.37px;font-size:14.40px;color:#111;left:1536.00px;">Last Updated: Now</div>
<div class="a t" style="top:112.78px;font-size:15.80px;color:#222;left:1645.50px;transform:scaleX(0.8967);transform-origin:left center;">Today</div>
<svg class="a" style="left:1691.25px;top:112.15px;" width="21.50" height="21.50" viewBox="0 0 24 24"><path fill="#222" d="M19 3h-1V1h-2v2H8V1H6v2H5c-1.11 0-1.99.9-1.99 2L3 19c0 1.1.89 2 2 2h14c1.1 0 2-.9 2-2V5c0-1.1-.9-2-2-2zm0 16H5V8h14v11zM7 10h5v5H7z"/></svg>
<div class="a t" style="top:162.58px;font-size:15.80px;color:#222;left:1632.70px;transform:scaleX(0.8734);transform-origin:left center;">All Days</div>
<svg class="a" style="left:1691.30px;top:163.00px;" width="20.60" height="20.60" viewBox="0 0 24 24"><path fill="#222" d="M7.41 8.59L12 13.17l4.59-4.58L18 10l-6 6-6-6 1.41-1.41z"/></svg>
<div class="a t" style="top:209.58px;font-size:15.80px;color:#111;left:1605.50px;transform:scaleX(0.9059);transform-origin:left center;">Clone Campaign</div>
<div class="a t" style="top:252.78px;font-size:15.80px;color:#111;left:1532.70px;transform:scaleX(0.9112);transform-origin:left center;">Edit Fire &amp; Forget® Settings</div>
<div class="a t" style="top:295.98px;font-size:15.80px;color:#111;left:1635.00px;transform:scaleX(0.9145);transform-origin:left center;">Add Images</div>
<div class="a t" style="top:337.88px;font-size:15.80px;color:#111;left:1657.40px;transform:scaleX(0.9027);transform-origin:left center;">Edit Link</div>
<div class="a t" style="top:380.88px;font-size:15.80px;color:#111;left:1618.90px;transform:scaleX(0.9338);transform-origin:left center;">Start Link Test</div>
<div class="a t" style="top:465.88px;font-size:15.80px;color:#111;left:1640.60px;transform:scaleX(0.8946);transform-origin:left center;">Pixel Setup</div>
<div class="a t" style="top:507.98px;font-size:15.80px;color:#111;left:1583.30px;transform:scaleX(0.9054);transform-origin:left center;">Reassign Campaign</div>
<div class="a t" style="top:550.78px;font-size:15.80px;color:#111;left:1520.10px;transform:scaleX(0.9278);transform-origin:left center;">Show Top Performing Images</div>
<div class="a t" style="top:593.68px;font-size:15.80px;color:#111;left:1552.80px;transform:scaleX(0.9116);transform-origin:left center;">Conversion Cap Settings</div>
<div class="a t" style="top:635.98px;font-size:15.80px;color:#111;left:1603.30px;transform:scaleX(0.9314);transform-origin:left center;">Taboola Settings</div>
<div class="a t" style="top:422.88px;font-size:15.80px;color:#111;left:1596.20px;transform:scaleX(0.9161);transform-origin:left center;">Preview Offer</div>
<svg class="a" style="left:1695.50px;top:426.05px;" width="17.70" height="17.70" viewBox="0 0 24 24"><path fill="#222" d="M16 1H4c-1.1 0-2 .9-2 2v14h2V3h12V1zm-1 4H8c-1.1 0-1.990.9-1.990 2L6 21c0 1.1.890 2 1.990 2H19c1.100 0 2-.9 2-2V11l-6-6zM8 21V7h6v5h5v9H8z"/></svg>
<div class="a" style="left:1439.00px;top:667.00px;width:287.00px;height:1.00px;background:#e0e0e0;"></div>
<div class="a t" style="top:682.68px;font-size:15.80px;color:#111;left:1548.50px;transform:scaleX(0.9192);transform-origin:left center;">Campaign Status</div>
<div class="a t" style="top:730.88px;font-size:15.80px;color:#111;left:1566.30px;transform:scaleX(0.9015);transform-origin:left center;">Fire &amp; Forget®</div>
<div class="a t" style="top:779.68px;font-size:15.80px;color:#111;left:1566.30px;transform:scaleX(0.9189);transform-origin:left center;">Archive Status</div>
<div class="a" style="left:1671.20px;top:686.00px;width:31.00px;height:12.20px;background:#a9d1a1;border-radius:6.1px;"></div>
<div class="a" style="left:1687.00px;top:683.10px;width:18.00px;height:18.00px;background:#5a9f45;border-radius:50%;box-shadow:0 1px 2px rgba(0,0,0,.25);"></div>
<div class="a" style="left:1671.20px;top:734.10px;width:30.80px;height:12.80px;background:#a8a8a8;border-radius:6.4px;"></div>
<div class="a" style="left:1668.90px;top:731.90px;width:18.00px;height:18.00px;background:#fbfbfb;border-radius:50%;box-shadow:0 1px 2.500px rgba(0,0,0,.4);"></div>
<div class="a" style="left:1671.20px;top:782.60px;width:30.80px;height:12.80px;background:#a8a8a8;border-radius:6.4px;"></div>
<div class="a" style="left:1668.90px;top:780.40px;width:18.00px;height:18.00px;background:#fbfbfb;border-radius:50%;box-shadow:0 1px 2.500px rgba(0,0,0,.4);"></div>
<div class="a" style="left:1654.80px;top:1164.90px;width:43.00px;height:43.00px;background:#333;border-radius:50%;"></div>
<svg class="a" style="left:1665.55px;top:1175.65px;" width="21.50" height="21.50" viewBox="0 0 24 24"><path fill="#fff" d="M12 22c1.1 0 2-.9 2-2h-4c0 1.1.89 2 2 2zm6-6v-5c0-3.07-1.64-5.64-4.5-6.32V4c0-.83-.67-1.5-1.5-1.5s-1.5.67-1.5 1.5v.68C7.63 5.36 6 7.92 6 11v5l-2 2v1h16v-1l-2-2z"/></svg>
<div class="a" style="left:1000px;top:1224px;width:726px;height:12px;background:linear-gradient(to bottom,rgba(242,240,240,0),rgba(240,237,237,.45));"></div>
</div></body></html>
